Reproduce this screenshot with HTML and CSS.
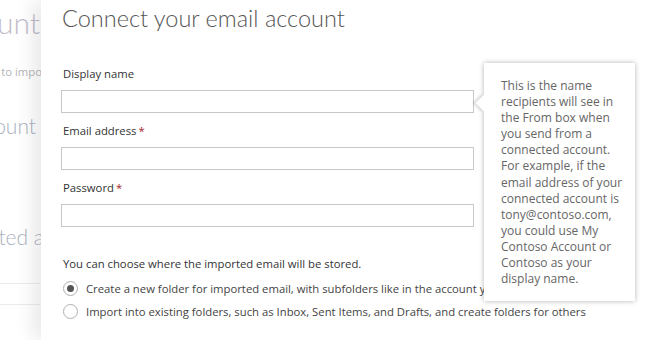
FILE: index.html
```html
<!doctype html>
<html lang="en">
<head>
    <meta charset="UTF-8">
    <title>Connect your email account</title>
    <link rel="stylesheet" href="styles.css">
</head>
<body>
<div class="page">
    <div class="page__back">
        <div class="page__row page__row_title"><span>Connected account</span></div>
        <div class="page__row page__row_small"><span>Use a connected account to impo</span></div>
        <div class="page__row page__row_sub"><span>Add a connected account</span></div>
        <div class="page__row page__row_sub page__row_low"><span>Your connected a</span></div>
        <div class="page__line"></div>
        <div class="page__line page__line_second"></div>
    </div>

    <div class="panel">
        <h1 class="panel__title">Connect your email account</h1>

        <div class="field">
            <label class="field__label">Display name</label>
            <input class="field__input" type="text">
        </div>
        <div class="field">
            <label class="field__label">Email address<span class="field__req">*</span></label>
            <input class="field__input" type="text">
        </div>
        <div class="field">
            <label class="field__label">Password<span class="field__req">*</span></label>
            <input class="field__input" type="password">
        </div>

        <p class="panel__note">You can choose where the imported email will be stored.</p>
        <div class="choice">
            <span class="choice__radio choice__radio_on"></span>
            <span>Create a new folder for imported email, with subfolders like in the account you connect</span>
        </div>
        <div class="choice">
            <span class="choice__radio"></span>
            <span>Import into existing folders, such as Inbox, Sent Items, and Drafts, and create folders for others</span>
        </div>
    </div>

    <div class="callout">
        This is the name recipients will see in the From box when you send from a connected account. For example, if the email address of your connected account is tony@contoso.com, you could use My Contoso Account or Contoso as your display name.
    </div>
</div>
</body>
</html>
```

FILE: styles.css
```css
html, body {
    margin: 0;
    padding: 0;
    background: #ffffff;
}

body {
    font-family: "Open Sans", "Liberation Sans", sans-serif;
    color: #333333;
    overflow: hidden;
}

.page {
    position: relative;
    width: 652px;
    height: 340px;
    overflow: hidden;
}

/* page behind the panel */
.page__back {
    width: 40px;
    padding-top: 4px;
}

.page__row {
    display: flex;
    justify-content: flex-end;
    white-space: nowrap;
}

.page__row_title {
    font-family: "Lato", "Open Sans", sans-serif;
    font-size: 30px;
    font-weight: 300;
    color: #c4bccc;
    height: 40px;
    width: 40px;
}

.page__row_small {
    font-size: 11.3px;
    color: #b5b5b5;
    margin-top: 20px;
    width: 42px;
}

.page__row_sub {
    font-family: "Lato", "Open Sans", sans-serif;
    font-size: 21px;
    font-weight: 300;
    color: #aab1c0;
    margin-top: 34px;
    width: 36px;
}

.page__row_low {
    margin-top: 86px;
    width: 44px;
}

.page__line {
    width: 40px;
    border-top: 1px solid #ebebeb;
    margin-top: 34px;
}

.page__line_second {
    margin-top: 20px;
}

.panel {
    position: absolute;
    top: 0;
    left: 41px;
    right: 0;
    bottom: 0;
    background: #ffffff;
    box-shadow: -8px 0 18px rgba(0, 0, 0, 0.09);
    padding: 0 0 0 21px;
}

.panel__title {
    margin: 0;
    padding-top: 1px;
    font-family: "Lato", "Open Sans", sans-serif;
    font-size: 23.5px;
    font-weight: 300;
    color: #555555;
    line-height: 34px;
}

.field {
    display: flex;
    flex-direction: column;
    width: 412px;
    margin-top: 30px;
}

.field + .field {
    margin-top: 9px;
}

.field__label {
    font-size: 11.3px;
    line-height: 18px;
    color: #333333;
    margin-left: 1px;
}

.field__req {
    color: #a4262c;
    margin-left: 2px;
}

.field__input {
    box-sizing: border-box;
    height: 23px;
    margin: 7px 0 0 -1px;
    border: 1px solid #c8c8c8;
    border-radius: 0;
    outline: none;
}

.panel__note {
    font-size: 11.3px;
    line-height: 18px;
    margin: 28px 0 4px 1px;
}

.choice {
    display: flex;
    align-items: center;
    gap: 8px;
    font-size: 11.3px;
    line-height: 23px;
    white-space: nowrap;
    margin-left: 1px;
    color: #444444;
}

.choice__radio {
    box-sizing: border-box;
    width: 15px;
    height: 15px;
    border: 1px solid #b0b0b0;
    border-radius: 50%;
    display: flex;
    align-items: center;
    justify-content: center;
}

.choice__radio_on::after {
    content: "";
    width: 7px;
    height: 7px;
    border-radius: 50%;
    background: #555555;
}

.callout {
    position: absolute;
    top: 63px;
    left: 484px;
    width: 151px;
    height: 238px;
    box-sizing: border-box;
    padding: 15px 10px 0 17px;
    background: #ffffff;
    box-shadow: 0 0 5px rgba(0, 0, 0, 0.3);
    font-size: 12px;
    line-height: 16.1px;
    color: #666666;
}

.callout::before {
    content: "";
    position: absolute;
    left: -6px;
    top: 34px;
    width: 12px;
    height: 12px;
    background: #ffffff;
    transform: rotate(45deg);
    box-shadow: -2px 2px 3px rgba(0, 0, 0, 0.15);
}
```
